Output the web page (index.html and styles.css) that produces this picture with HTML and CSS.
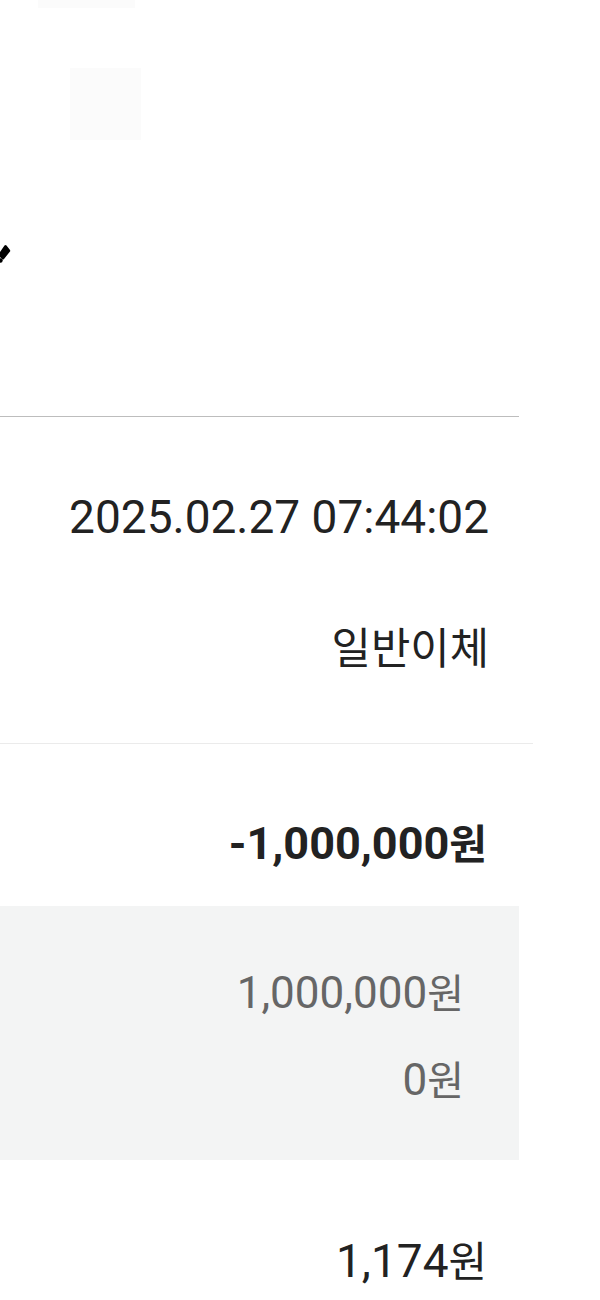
FILE: index.html
```html
<!DOCTYPE html>
<html lang="ko">
<head>
<meta charset="utf-8">
<title>거래 상세</title>
<link rel="stylesheet" href="styles.css">
</head>
<body>
<div class="screen">
  <div class="header">
    <div class="ghost-bar"></div>
    <div class="ghost-square"></div>
    <svg class="edge-icon" width="14" height="22" viewBox="0 0 14 22" aria-hidden="true">
      <path d="M4.5 1.5 Q5.5 0.5 6.5 1.5 L10 6 Q10.5 7 10 7.5 L4 15 Q3 16 2 15 L0 13 L0 8 Z" fill="#000"/>
      <circle cx="0.5" cy="16.5" r="2.2" fill="#000"/>
    </svg>
  </div>
  <div class="divider-strong"></div>
  <div class="info">
    <div class="row date">2025.02.27 07:44:02</div>
    <div class="row type"><span class="ko">일반이체</span></div>
  </div>
  <div class="divider-light"></div>
  <div class="amount">
    <div class="row strong">-1,000,000<span class="ko">원</span></div>
  </div>
  <div class="breakdown">
    <div class="row sub first">1,000,000<span class="ko">원</span></div>
    <div class="row sub second">0<span class="ko">원</span></div>
  </div>
  <div class="balance">
    <div class="row">1,174<span class="ko">원</span></div>
  </div>
</div>
</body>
</html>
```
FILE: styles.css
```css
html, body {
  margin: 0;
  padding: 0;
  background: #ffffff;
}

.screen {
  width: 600px;
  font-family: Roboto, "Noto Sans CJK KR", sans-serif;
  color: #222222;
}

.header {
  height: 416px;
  overflow: hidden;
}

.ghost-bar {
  margin-left: 38px;
  width: 97px;
  height: 8px;
  background: #fbfbfb;
}

.ghost-square {
  margin-left: 70px;
  margin-top: 60px;
  width: 71px;
  height: 72px;
  background: #fbfbfb;
}

.edge-icon {
  display: block;
  margin-top: 104px;
}

.divider-strong {
  width: 519px;
  height: 1px;
  background: #bdbdbd;
}

.divider-light {
  width: 533px;
  height: 1px;
  background: #ebebeb;
}

.row {
  text-align: right;
  font-size: 46px;
  line-height: 54px;
  white-space: nowrap;
}

.ko {
  font-family: "Noto Sans CJK KR", sans-serif;
  font-size: 0.91em;
  line-height: 1;
}

.type .ko {
  font-size: 0.93em;
}

.info {
  height: 326px;
  padding: 73px 111px 0 0;
  box-sizing: border-box;
}

.type {
  margin-top: 77px;
}

.amount {
  padding: 73px 113px 35px 0;
}

.strong {
  font-size: 45px;
  font-weight: 700;
}

.breakdown {
  width: 519px;
  height: 254px;
  box-sizing: border-box;
  background: #f3f4f4;
  padding: 60px 55px 0 0;
}

.sub {
  font-size: 44px;
  color: #666666;
}

.sub.second {
  margin-top: 33px;
}

.balance {
  padding: 74px 113px 0 0;
}
```
